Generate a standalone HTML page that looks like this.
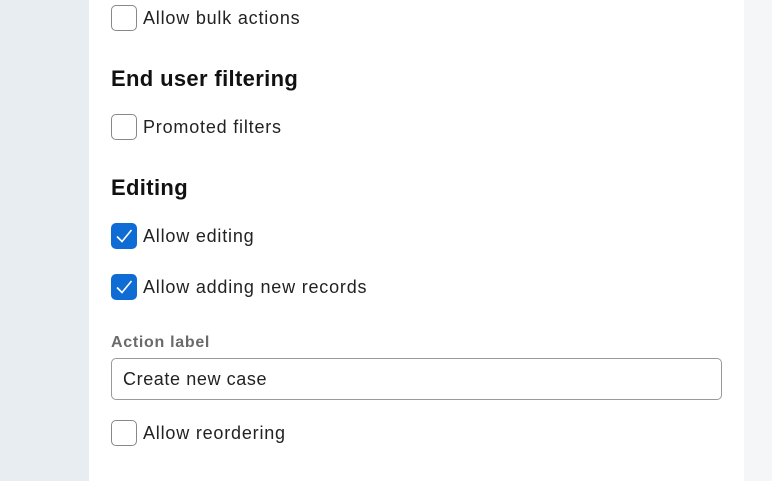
<!DOCTYPE html>
<html><head><style>
body{margin:0;width:772px;height:481px;overflow:hidden;background:#f5f6f8;font-family:"Liberation Sans",sans-serif;position:relative}
.side{position:absolute;left:0;top:0;width:89px;height:481px;background:#e8edf1}
.panel{position:absolute;left:89px;top:0;width:655px;height:481px;background:#fff}
.cb{position:absolute;left:111px;width:24px;height:24px;border:1px solid #888;border-radius:5px;background:#fff}
.cb.on{background:#0f6cd4;border-color:#0f6cd4}
.t{position:absolute;left:143px;font-size:18px;color:#222;line-height:20px;letter-spacing:0.8px}
.h{position:absolute;left:111px;font-size:22px;font-weight:bold;color:#111;line-height:24px;letter-spacing:0.35px}
.lab{position:absolute;left:111px;font-size:16px;font-weight:bold;color:#6a6a6a;line-height:18px;letter-spacing:0.7px}
.inp{position:absolute;left:111px;top:358px;width:611px;height:42px;border:1px solid #999;border-radius:5px;box-sizing:border-box}
.inp span{position:absolute;left:11px;top:10px;font-size:18px;color:#222;letter-spacing:0.6px}
</style></head><body>
<div class="side"></div><div class="panel"></div>
<div class="cb" style="top:5px"></div><div class="t" style="top:8px">Allow bulk actions</div>
<div class="h" style="top:67px">End user filtering</div>
<div class="cb" style="top:114px"></div><div class="t" style="top:117px">Promoted filters</div>
<div class="h" style="top:176px">Editing</div>
<div class="cb on" style="top:223px"><svg width="24" height="24"><path d="M5 12.5l5 5L19.5 6" stroke="#fff" stroke-width="1.6" fill="none"/></svg></div><div class="t" style="top:226px">Allow editing</div>
<div class="cb on" style="top:274px"><svg width="24" height="24"><path d="M5 12.5l5 5L19.5 6" stroke="#fff" stroke-width="1.6" fill="none"/></svg></div><div class="t" style="top:277px">Allow adding new records</div>
<div class="lab" style="top:334px">Action label</div>
<div class="inp"><span>Create new case</span></div>
<div class="cb" style="top:420px"></div><div class="t" style="top:423px">Allow reordering</div>
</body></html>
